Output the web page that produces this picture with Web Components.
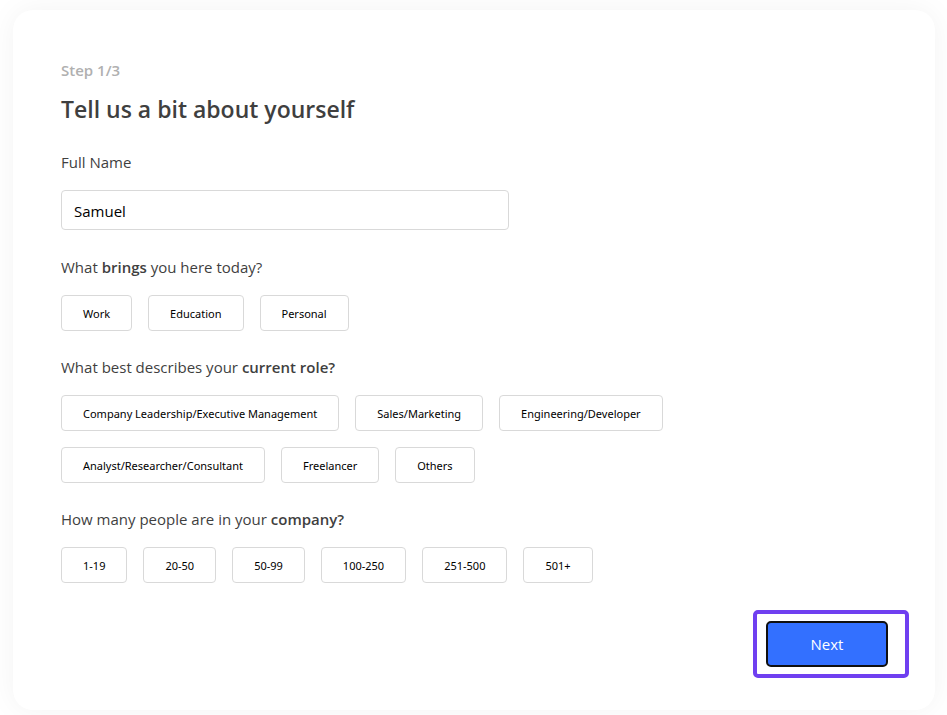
<!DOCTYPE html>
<html lang="en">
<head>
<meta charset="utf-8">
<meta name="viewport" content="width=device-width, initial-scale=1">
<title>Tell us a bit about yourself</title>
<style>
  body {
    margin: 0;
    padding: 10px 12px 5px 13px;
    background: #fff;
    color: #3f3f3f;
    font: 15px/24px "Open Sans", "Noto Sans", sans-serif;
  }
  b { font-weight: 600; }
</style>
</head>
<body>
<onboarding-card step="Step 1/3" heading="Tell us a bit about yourself">
  <text-field label="Full Name" value="Samuel"></text-field>
  <choice-group>
    <span slot="label">What <b>brings</b> you here today?</span>
    <choice-chip>Work</choice-chip>
    <choice-chip>Education</choice-chip>
    <choice-chip>Personal</choice-chip>
  </choice-group>
  <choice-group>
    <span slot="label">What best describes your <b>current role?</b></span>
    <choice-chip>Company Leadership/Executive Management</choice-chip>
    <choice-chip>Sales/Marketing</choice-chip>
    <choice-chip>Engineering/Developer</choice-chip>
    <choice-chip>Analyst/Researcher/Consultant</choice-chip>
    <choice-chip>Freelancer</choice-chip>
    <choice-chip>Others</choice-chip>
  </choice-group>
  <choice-group>
    <span slot="label">How many people are in your <b>company?</b></span>
    <choice-chip>1-19</choice-chip>
    <choice-chip>20-50</choice-chip>
    <choice-chip>50-99</choice-chip>
    <choice-chip>100-250</choice-chip>
    <choice-chip>251-500</choice-chip>
    <choice-chip>501+</choice-chip>
  </choice-group>
  <next-button slot="actions">Next</next-button>
</onboarding-card>

<script>
const define = (name, html, setup) => {
  const template = document.createElement('template');
  template.innerHTML = html;
  customElements.define(name, class extends HTMLElement {
    constructor() {
      super();
      this.attachShadow({ mode: 'open' }).append(template.content.cloneNode(true));
    }
    connectedCallback() {
      if (setup) setup(this, this.shadowRoot);
    }
  });
};

define('onboarding-card', `
  <style>
    :host {
      display: block;
      padding: 48px 47px 43px 48px;
      border-radius: 20px;
      background: #fff;
      box-shadow: 0 0 30px rgba(0, 0, 0, 0.05);
    }
    p { margin: 0; color: #b0b0b0; font-weight: 600; }
    h1 { margin: 11px 0 25px; font-size: 23px; line-height: 32px; font-weight: 600; }
    .fields { display: flex; flex-direction: column; gap: 24px; max-width: 660px; }
    footer { display: flex; justify-content: flex-end; margin-top: 38px; }
  </style>
  <p></p>
  <h1></h1>
  <div class="fields"><slot></slot></div>
  <footer><slot name="actions"></slot></footer>
`, (host, root) => {
  root.querySelector('p').textContent = host.getAttribute('step');
  root.querySelector('h1').textContent = host.getAttribute('heading');
});

define('text-field', `
  <style>
    :host { display: block; padding-bottom: 1px; }
    label { display: block; margin-bottom: 16px; }
    input {
      display: block;
      box-sizing: border-box;
      width: 100%;
      max-width: 448px;
      height: 40px;
      padding: 2px 12px 0;
      border: 1px solid #d9d9d9;
      border-radius: 4px;
      background: #fff;
      color: #000;
      font: inherit;
      outline: none;
    }
  </style>
  <label for="field"></label>
  <input id="field" type="text">
`, (host, root) => {
  root.querySelector('label').textContent = host.getAttribute('label');
  root.querySelector('input').value = host.getAttribute('value');
});

define('choice-group', `
  <style>
    :host { display: block; }
    ::slotted(span) { display: block; }
    ::slotted(choice-chip) { flex: none; }
    .options { display: flex; flex-wrap: wrap; gap: 16px; margin-top: 16px; }
  </style>
  <div role="group" aria-labelledby="label">
    <div id="label"><slot name="label"></slot></div>
    <div class="options"><slot></slot></div>
  </div>
`);

define('choice-chip', `
  <style>
    :host { display: block; }
    button {
      display: block;
      height: 36px;
      padding: 1px 21px 0;
      border: 1px solid #d9d9d9;
      border-radius: 4px;
      background: #fff;
      color: #000;
      font: 11px/20px "Noto Sans", sans-serif;
      cursor: pointer;
    }
  </style>
  <button type="button"><slot></slot></button>
`);

define('next-button', `
  <style>
    :host { display: block; position: relative; }
    button {
      display: block;
      box-sizing: border-box;
      min-width: 122px;
      height: 46px;
      padding: 0 24px;
      border: 2px solid #101010;
      border-radius: 5px;
      background: #3370ff;
      color: #fff;
      font: inherit;
      cursor: pointer;
    }
    .ring {
      position: absolute;
      inset: -11px -21px -11px -13px;
      border: 4px solid #6f3ff0;
      border-radius: 5px;
      pointer-events: none;
    }
  </style>
  <button type="button"><slot></slot></button>
  <div class="ring"></div>
`);
</script>
</body>
</html>
